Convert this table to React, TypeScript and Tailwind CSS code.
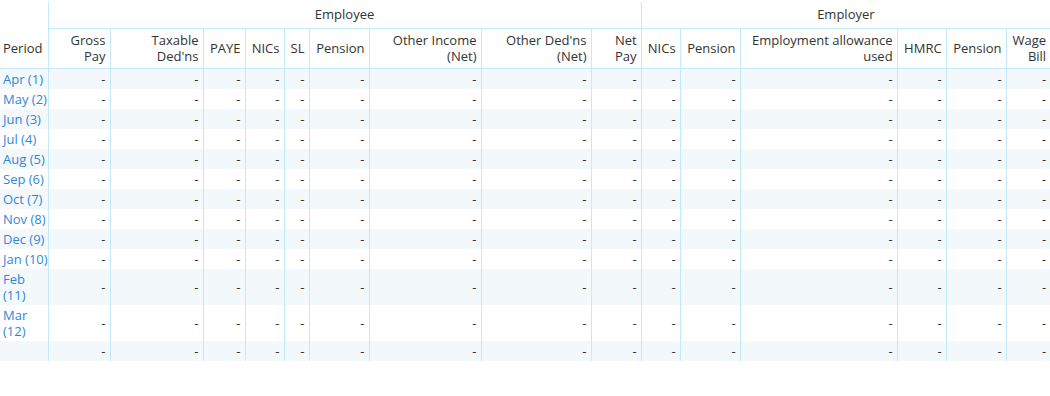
import React from "react";

const widths = [48, 62, 93, 42, 39, 25, 60, 112, 110, 50, 39, 60, 157, 49, 60, 44];

const headers: React.ReactNode[] = [
	<>Gross<br />Pay</>,
	<>Taxable<br />Ded'ns</>,
	"PAYE",
	"NICs",
	"SL",
	"Pension",
	<>Other Income<br />(Net)</>,
	<>Other Ded'ns<br />(Net)</>,
	<>Net<br />Pay</>,
	"NICs",
	"Pension",
	<>Employment allowance<br />used</>,
	"HMRC",
	"Pension",
	<>Wage<br />Bill</>,
];

const periods: React.ReactNode[] = [
	"Apr (1)",
	"May (2)",
	"Jun (3)",
	"Jul (4)",
	"Aug (5)",
	"Sep (6)",
	"Oct (7)",
	"Nov (8)",
	"Dec (9)",
	"Jan (10)",
	<>Feb<br />(11)</>,
	<>Mar<br />(12)</>,
	null,
];

export default function App() {
	return (
		<div className="w-[1050px] h-[396px] bg-white pt-[2px] overflow-hidden" style={{ fontFamily: '"Open Sans", "Noto Sans", sans-serif' }}>
			<table className="table-fixed border-collapse w-[1050px] text-[13px] leading-4 text-[#333]">
				<colgroup>
					{widths.map((w, i) => (
						<col key={i} style={{ width: w }} />
					))}
				</colgroup>
				<thead>
					<tr className="h-[26px]">
						<th className="p-0 font-normal"></th>
						<th colSpan={9} className="font-normal text-center border-l border-b border-[#c4eafa] pb-[2px]">
							Employee
						</th>
						<th colSpan={6} className="font-normal text-center border-l border-b border-[#c4eafa] pb-[2px]">
							Employer
						</th>
					</tr>
					<tr className="h-[40px]">
						<th className="font-normal text-left pl-[3px] pr-0 border-b border-[#c4eafa] whitespace-nowrap">
							Period
						</th>
						{headers.map((h, i) => (
							<th
								key={i}
								className="font-normal text-right pl-[2px] pr-[4px] py-[3px] border-l border-b border-[#c4eafa] whitespace-nowrap"
							>
								{h}
							</th>
						))}
					</tr>
				</thead>
				<tbody>
					{periods.map((p, r) => (
						<tr key={r} className={r % 2 === 0 ? "bg-[#f3f8fb]" : "bg-white"}>
							<td className="pl-[3px] pr-0 py-[2px] text-left text-[#2f87dc] whitespace-nowrap h-[20px]">
								{p}
							</td>
							{headers.map((_, c) => (
								<td
									key={c}
									className="pr-[4px] pl-0 py-[2px] text-right border-l border-[#c4eafa] whitespace-nowrap"
								>
									-
								</td>
							))}
						</tr>
					))}
				</tbody>
			</table>
		</div>
	);
}
